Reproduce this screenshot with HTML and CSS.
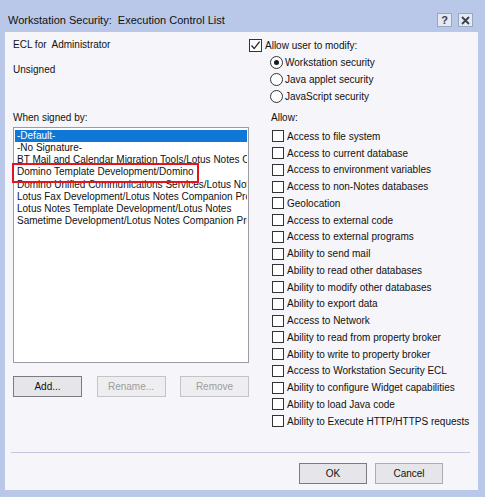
FILE: index.html
```html
<!DOCTYPE html>
<html>
<head>
<meta charset="utf-8">
<link rel="stylesheet" href="styles.css">
</head>
<body>
<div class="window">
  <div class="titlebar">
    <span class="title">Workstation Security:  Execution Control List</span>
    <div class="tb-buttons">
      <span class="tb-btn">?</span>
      <span class="tb-btn tb-close">
        <svg width="9" height="9" viewBox="0 0 9 9"><path d="M1 1 L8 8 M8 1 L1 8" stroke="#3a3f4a" stroke-width="1.8"/></svg>
      </span>
    </div>
  </div>
  <div class="client">
    <div class="main">
      <div class="left">
        <div class="line first">ECL for  Administrator</div>
        <div class="line unsigned">Unsigned</div>
        <div class="line signed-label">When signed by:</div>
        <div class="listwrap">
          <div class="list">
            <div class="row selected">-Default-</div>
            <div class="row">-No Signature-</div>
            <div class="row">BT Mail and Calendar Migration Tools/Lotus Notes Companion Products</div>
            <div class="row">Domino Template Development/Domino</div>
            <div class="row">Domino Unified Communications Services/Lotus Notes Companion Products</div>
            <div class="row">Lotus Fax Development/Lotus Notes Companion Products</div>
            <div class="row">Lotus Notes Template Development/Lotus Notes</div>
            <div class="row">Sametime Development/Lotus Notes Companion Products</div>
          </div>
          <div class="highlight-box"></div>
        </div>
        <div class="list-buttons">
          <button class="btn btn-dark">Add...</button>
          <button class="btn btn-disabled">Rename...</button>
          <button class="btn btn-disabled">Remove</button>
        </div>
      </div>
      <div class="right">
        <div class="check-row allow-row">
          <span class="box checked"><svg width="11" height="11" viewBox="0 0 11 11"><path d="M1.5 5.5 L4.2 8.6 L9.6 1.6" fill="none" stroke="#222" stroke-width="1.3"/></svg></span>
          <span class="label">Allow user to modify:</span>
        </div>
        <div class="radios">
          <div class="radio-row"><span class="radio on"><span class="dot"></span></span><span class="label">Workstation security</span></div>
          <div class="radio-row"><span class="radio"></span><span class="label">Java applet security</span></div>
          <div class="radio-row"><span class="radio"></span><span class="label">JavaScript security</span></div>
        </div>
        <div class="line allow-label">Allow:</div>
        <div class="checks">
          <div class="check-row"><span class="box"></span><span class="label">Access to file system</span></div>
          <div class="check-row"><span class="box"></span><span class="label">Access to current database</span></div>
          <div class="check-row"><span class="box"></span><span class="label">Access to environment variables</span></div>
          <div class="check-row"><span class="box"></span><span class="label">Access to non-Notes databases</span></div>
          <div class="check-row"><span class="box"></span><span class="label">Geolocation</span></div>
          <div class="check-row"><span class="box"></span><span class="label">Access to external code</span></div>
          <div class="check-row"><span class="box"></span><span class="label">Access to external programs</span></div>
          <div class="check-row"><span class="box"></span><span class="label">Ability to send mail</span></div>
          <div class="check-row"><span class="box"></span><span class="label">Ability to read other databases</span></div>
          <div class="check-row"><span class="box"></span><span class="label">Ability to modify other databases</span></div>
          <div class="check-row"><span class="box"></span><span class="label">Ability to export data</span></div>
          <div class="check-row"><span class="box"></span><span class="label">Access to Network</span></div>
          <div class="check-row"><span class="box"></span><span class="label">Ability to read from property broker</span></div>
          <div class="check-row"><span class="box"></span><span class="label">Ability to write to property broker</span></div>
          <div class="check-row"><span class="box"></span><span class="label">Access to Workstation Security ECL</span></div>
          <div class="check-row"><span class="box"></span><span class="label">Ability to configure Widget capabilities</span></div>
          <div class="check-row"><span class="box"></span><span class="label">Ability to load Java code</span></div>
          <div class="check-row"><span class="box"></span><span class="label">Ability to Execute HTTP/HTTPS requests</span></div>
        </div>
      </div>
    </div>
    <div class="sep"></div>
    <div class="footer">
      <button class="btn btn-dark btn-footer">OK</button>
      <button class="btn btn-footer">Cancel</button>
    </div>
  </div>
</div>
</body>
</html>
```

FILE: styles.css
```css
* { box-sizing: border-box; }
html, body {
  margin: 0;
  padding: 0;
  background: #bccbe9;
}
body {
  font-family: "Liberation Sans", Arial, sans-serif;
  font-size: 10px;
  color: #111;
}
.window {
  width: 485px;
  height: 497px;
  background: #b9c8e8;
  padding: 0 7px 7px 5px;
  display: flex;
  flex-direction: column;
}
.titlebar {
  height: 32px;
  padding: 8px 5px 0 3px;
  display: flex;
  align-items: center;
  justify-content: space-between;
}
.title {
  font-size: 11px;
  white-space: pre;
  color: #111;
}
.tb-buttons {
  display: flex;
  gap: 6px;
}
.tb-btn {
  width: 15px;
  height: 14px;
  background: #e4e9f4;
  border: 1px solid #9aa6c0;
  display: flex;
  align-items: center;
  justify-content: center;
  font-size: 11px;
  font-weight: bold;
  color: #3a3f4a;
}
.client {
  flex: 1;
  background: #f6f5f9;
  display: flex;
  flex-direction: column;
}
.main {
  height: 420px;
  display: flex;
  padding-left: 8px;
}
.left {
  width: 237px;
  padding-top: 7px;
  display: flex;
  flex-direction: column;
}
.line {
  line-height: 12px;
  height: 12px;
  white-space: pre;
}
.unsigned { margin-top: 13px; }
.signed-label { margin-top: 36px; }
.listwrap {
  position: relative;
  margin-top: 3px;
  width: 236px;
}
.list {
  height: 236px;
  background: #fff;
  border: 1px solid #9c9ca4;
  padding: 2px 1px 0 1px;
  overflow: hidden;
}
.row {
  height: 12.15px;
  line-height: 12.15px;
  padding-left: 2px;
  white-space: nowrap;
  overflow: hidden;
}
.row.selected {
  background: #0f78d6;
  color: #fff;
}
.highlight-box {
  position: absolute;
  left: -1px;
  top: 36px;
  width: 187px;
  height: 20px;
  border: 2px solid #e3141b;
}
.list-buttons {
  margin-top: 13px;
  width: 236px;
  display: flex;
  justify-content: space-between;
}
.btn {
  font-family: "Liberation Sans", Arial, sans-serif;
  font-size: 10px;
  width: 69px;
  height: 21px;
  padding: 0;
  background: #e6e6ea;
  border: 1px solid #adadad;
  color: #111;
}
.btn-dark { border-color: #7c7c80; }
.btn-disabled {
  background: #eeeef1;
  border-color: #c4c4c8;
  color: #9c9ca0;
}
.right {
  padding-top: 6px;
  display: flex;
  flex-direction: column;
}
.check-row, .radio-row {
  display: flex;
  align-items: center;
}
.allow-row {
  height: 14px;
  margin-left: -1px;
}
.allow-row .box {
  width: 13px;
  height: 13px;
}
.allow-row .label { margin-left: 3px; }
.box {
  width: 12px;
  height: 12px;
  border: 1px solid #333;
  background: #fff;
  display: flex;
  align-items: center;
  justify-content: center;
  flex: none;
}
.radios {
  margin-top: 2px;
  padding-left: 20px;
}
.radio-row { height: 17px; }
.radio {
  width: 13px;
  height: 13px;
  border: 1px solid #333;
  border-radius: 50%;
  background: #fff;
  display: flex;
  align-items: center;
  justify-content: center;
  flex: none;
}
.dot {
  width: 5px;
  height: 5px;
  border-radius: 50%;
  background: #1a1a1a;
}
.radio-row .label { margin-left: 2px; }
.allow-label {
  margin-top: 7px;
  padding-left: 21px;
}
.checks {
  margin-top: 4px;
  padding-left: 22px;
}
.checks .check-row {
  height: 16.76px;
}
.checks .label {
  margin-left: 3px;
  white-space: nowrap;
}
.sep {
  height: 1px;
  background: #c4c6de;
  margin: 0 8px 0 6px;
}
.footer {
  margin-top: 10px;
  display: flex;
  justify-content: flex-end;
  gap: 8px;
  padding-right: 35px;
}
.btn-footer {
  width: 68px;
  height: 21px;
}
```
